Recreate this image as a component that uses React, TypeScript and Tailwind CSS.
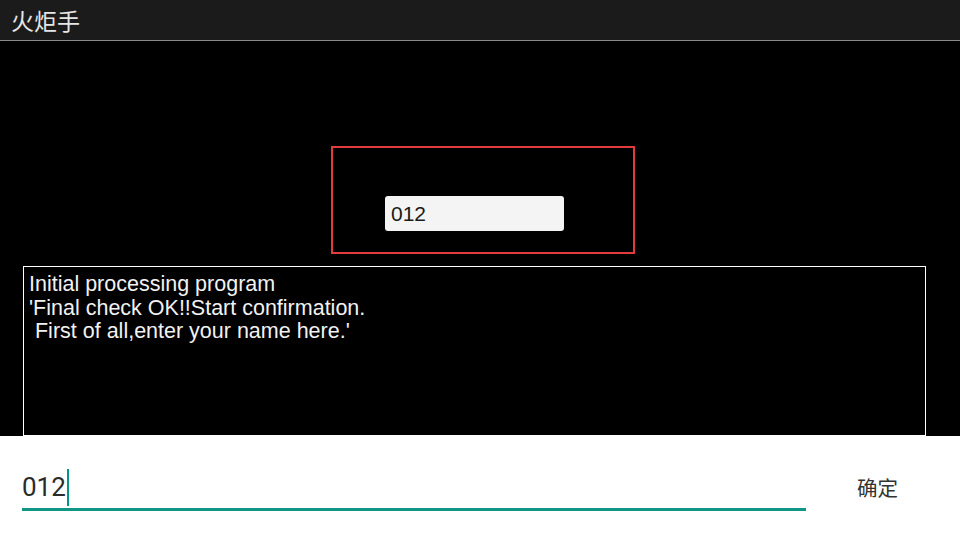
export default function App() {
  const cjk = { fontFamily: '"Noto Sans CJK SC", "Noto Sans", sans-serif' };
  return (
    <div className="w-[960px] h-[540px] bg-black flex flex-col overflow-hidden" style={{ fontFamily: '"Liberation Sans", Arial, sans-serif' }}>
      {/* title bar */}
      <div className="h-[41px] shrink-0 bg-[#1b1b1b] border-b border-[#8a8a8a] flex items-center pl-[11px]">
        <span className="text-[23px] text-[#e6e6e6] leading-none" style={cjk}>火炬手</span>
      </div>

      {/* body */}
      <div className="flex-1 flex flex-col relative overflow-hidden">
        <div className="pt-[105px] pl-[331px]">
          <div className="w-[304px] h-[108px] border-2 border-[#e23b3b] pt-[48px] pl-[52px]">
            <div className="w-[179px] h-[35px] bg-[#f4f4f4] rounded-[3px] flex items-center pl-[6px] text-[21px] text-[#1a1a1a]">
              012
            </div>
          </div>
        </div>
        <div className="mt-[12px] ml-[23px] w-[903px] h-[200px] border border-white pl-[5px] pt-[6px] text-[21.5px] leading-[23.5px] text-[#f2f2f2] whitespace-pre">
          {"Initial processing program\n'Final check OK!!Start confirmation.\n First of all,enter your name here.'"}
        </div>
      </div>

      {/* bottom input panel */}
      <div className="h-[104px] shrink-0 bg-white flex items-start relative">
        <div className="ml-[22px] mt-[32px] w-[784px] flex flex-col">
          <div className="flex items-center h-[38px]">
            <span className="text-[26px] text-[#2b2b2b] leading-none" style={{ fontFamily: 'Roboto, sans-serif' }}>012</span>
            <span className="w-[2px] h-[37px] bg-[#009688] ml-[1px]" />
          </div>
          <div className="h-[3px] mt-[2px] bg-[#0f9684]" />
        </div>
        <div className="ml-[51px] mt-[41px] text-[20.5px] text-[#333] leading-none" style={cjk}>确定</div>
      </div>
    </div>
  );
}
